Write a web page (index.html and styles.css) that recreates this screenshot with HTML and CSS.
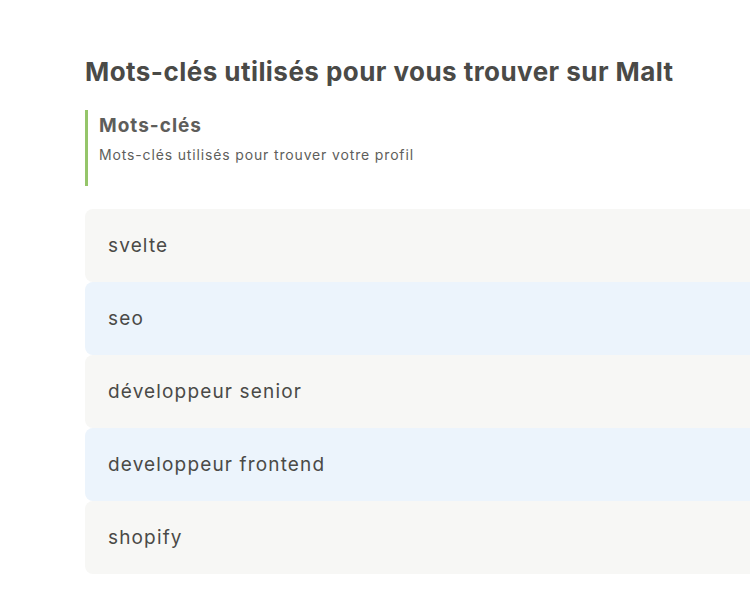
FILE: index.html
```html
<!DOCTYPE html>
<html lang="fr">
<head>
<meta charset="utf-8">
<link rel="stylesheet" href="styles.css">
</head>
<body>
<main class="page">
  <h1 class="title">Mots-clés utilisés pour vous trouver sur Malt</h1>
  <section class="block">
    <h2 class="block-title">Mots-clés</h2>
    <p class="block-sub">Mots-clés utilisés pour trouver votre profil</p>
  </section>
  <ul class="list">
    <li class="row">svelte</li>
    <li class="row alt">seo</li>
    <li class="row">développeur senior</li>
    <li class="row alt">developpeur frontend</li>
    <li class="row">shopify</li>
  </ul>
</main>
</body>
</html>
```
FILE: styles.css
```css
html, body { margin: 0; padding: 0; background: #fff; overflow: hidden; }
body { font-family: Inter, "Open Sans", sans-serif; color: #4a4a47; }
.page { padding: 52px 0 0 85px; width: 760px; }
.title { margin: 0; font-size: 26px; font-weight: 700; line-height: 40px; color: #4a4a47; letter-spacing: 0.45px; }
.block { margin-top: 18px; border-left: 3px solid #95c56a; padding: 4px 0 22px 11px; }
.block-title { margin: 0; font-size: 19px; font-weight: 700; line-height: 24px; color: #5e5e5b; letter-spacing: 1px; }
.block-sub { margin: 8px 0 0; font-size: 14px; line-height: 18px; color: #5e5e5b; letter-spacing: 0.85px; }
.list { list-style: none; margin: 23px 0 0; padding: 0; }
.row { height: 73px; display: flex; align-items: center; padding-left: 23px; font-size: 19px; color: #4a4a47; background: #f7f7f5; border-radius: 8px; letter-spacing: 1.15px; }
.row.alt { background: #ecf4fc; }
```
